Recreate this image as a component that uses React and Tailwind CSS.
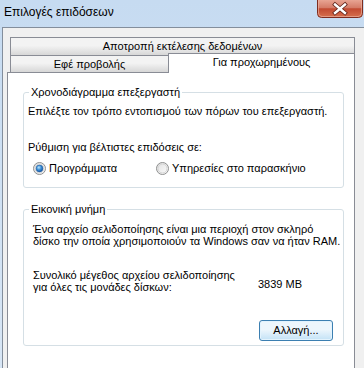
import React from "react";

function Radio({ checked }) {
  return (
    <svg width="13" height="13" viewBox="0 0 13 13" className="shrink-0">
      <defs>
        <linearGradient id={checked ? "rb1" : "rb0"} x1="0" y1="0" x2="1" y2="1">
          <stop offset="0" stopColor="#e0e0e0" />
          <stop offset="1" stopColor="#fdfdfd" />
        </linearGradient>
        <radialGradient id="rdot" cx="0.4" cy="0.35" r="0.7">
          <stop offset="0" stopColor="#b9e3fb" />
          <stop offset="0.5" stopColor="#3a8ed6" />
          <stop offset="1" stopColor="#0f4c9c" />
        </radialGradient>
      </defs>
      <circle cx="6.5" cy="6.5" r="6" fill={`url(#${checked ? "rb1" : "rb0"})`} stroke="#8e8f8f" strokeWidth="1" />
      <circle cx="6.5" cy="6.5" r="4.5" fill="none" stroke="#d4d4d4" strokeWidth="1" />
      {checked && <circle cx="6.5" cy="6.5" r="3.4" fill="url(#rdot)" stroke="#1c5b9f" strokeWidth="0.6" />}
    </svg>
  );
}

function CloseButton() {
  return (
    <svg width="46" height="18" viewBox="0 0 46 18" className="block">
      <defs>
        <linearGradient id="cbg" x1="0" y1="0" x2="0" y2="1">
          <stop offset="0" stopColor="#e8a493" />
          <stop offset="0.45" stopColor="#d47a66" />
          <stop offset="0.5" stopColor="#c24a31" />
          <stop offset="1" stopColor="#d6714f" />
        </linearGradient>
      </defs>
      <path d="M0.5 0 V13.5 Q0.5 17.5 4.5 17.5 H41.5 Q45.5 17.5 45.5 13.5 V0" fill="url(#cbg)" stroke="#7e2c1f" strokeWidth="1" />
      <path d="M1.5 0 V13 Q1.5 16.5 5 16.5 H41 Q44.5 16.5 44.5 13 V0" fill="none" stroke="#efb9a8" strokeOpacity="0.6" strokeWidth="1" />
      <path d="M18 4.5 L28 13 M28 4.5 L18 13" stroke="#5a1d14" strokeWidth="4" strokeLinecap="square" />
      <path d="M18 4.5 L28 13 M28 4.5 L18 13" stroke="#ffffff" strokeWidth="2.4" strokeLinecap="square" />
    </svg>
  );
}

export default function App() {
  const font = "font-['Liberation_Sans',Arial,sans-serif]";
  return (
    <div className={`w-[364px] h-[368px] overflow-hidden bg-gradient-to-b from-[#c6dbf1] to-[#d8e6f5] text-[11px] text-black whitespace-nowrap ${font}`}>
      <div className="h-[27px] flex items-start">
        <span className="ml-[4px] mt-[5px] leading-[15px] text-[12px]">Επιλογές επιδόσεων</span>
        <div className="ml-auto mr-[1px]">
          <CloseButton />
        </div>
      </div>
      <div className="ml-[2px] w-[370px] h-[341px] border-l border-t border-[#838e9c] bg-[#f0f0f0] pt-[9px] pl-[4px]">
        <div className="w-[348px]">
          <div className="ml-[3px] w-[345px] h-[19px] border border-[#898c95] bg-gradient-to-b from-[#f3f3f3] from-45% to-[#d7d7d7] flex items-center justify-center leading-[15px]">
            Αποτροπή εκτέλεσης δεδομένων
          </div>
          <div className="-mt-px h-[17px] flex items-end relative z-10">
            <div className="ml-[3px] w-[158px] h-[17px] border-t border-l border-[#898c95] bg-gradient-to-b from-[#f3f3f3] from-45% to-[#d7d7d7] flex items-center justify-center leading-[15px]">
              Εφέ προβολής
            </div>
            <div className="w-[187px] h-[20px] -mb-px border-t border-l border-r border-[#898c95] bg-white flex items-start justify-center pt-[1px] leading-[15px]">
              Για προχωρημένους
            </div>
          </div>
          <div className="h-[300px] border border-[#898c95] bg-white">
            <fieldset className="ml-[15px] mt-[12px] w-[321px] border border-[#d5dfe5] rounded-[3px] pb-[11px]">
              <legend className="ml-[5px] px-[2px] leading-[15px]">Χρονοδιάγραμμα επεξεργαστή</legend>
              <div className="pl-[4px]">
                <p className="mt-[4px] leading-[15px]">Επιλέξτε τον τρόπο εντοπισμού των πόρων του επεξεργαστή.</p>
                <p className="mt-[21px] leading-[15px]">Ρύθμιση για βέλτιστες επιδόσεις σε:</p>
                <div className="mt-[6px] h-[15px] flex items-center">
                  <div className="ml-[5px] w-[123px] flex items-center gap-[3px]">
                    <Radio checked />
                    <span className="leading-[15px]">Προγράμματα</span>
                  </div>
                  <div className="flex items-center gap-[3px]">
                    <Radio checked={false} />
                    <span className="leading-[15px]">Υπηρεσίες στο παρασκήνιο</span>
                  </div>
                </div>
              </div>
            </fieldset>
            <fieldset className="ml-[15px] mt-[14px] w-[321px] border border-[#d5dfe5] rounded-[3px] pb-[4px]">
              <legend className="ml-[5px] px-[2px] leading-[15px]">Εικονική μνήμη</legend>
              <div className="pl-[9px]">
                <p className="mt-[6px] leading-[12px]">
                  Ένα αρχείο σελιδοποίησης είναι μια περιοχή στον σκληρό<br />
                  δίσκο την οποία χρησιμοποιούν τα Windows σαν να ήταν RAM.
                </p>
                <div className="mt-[22px] flex">
                  <p className="w-[225px] leading-[12px]">
                    Συνολικό μέγεθος αρχείου σελιδοποίησης<br />
                    για όλες τις μονάδες δίσκων:
                  </p>
                  <span className="mt-[9px] leading-[12px]">3839 MB</span>
                </div>
                <div className="mt-[27px] flex justify-end pr-[10px]">
                  <button className="w-[74px] h-[21px] rounded-[3px] border border-[#3c7fb1] bg-gradient-to-b from-[#edf6fc] from-45% to-[#c3e2f6] shadow-[inset_0_0_0_1px_#e3f3fd] leading-[15px]">
                    Αλλαγή...
                  </button>
                </div>
              </div>
            </fieldset>
          </div>
        </div>
      </div>
    </div>
  );
}
